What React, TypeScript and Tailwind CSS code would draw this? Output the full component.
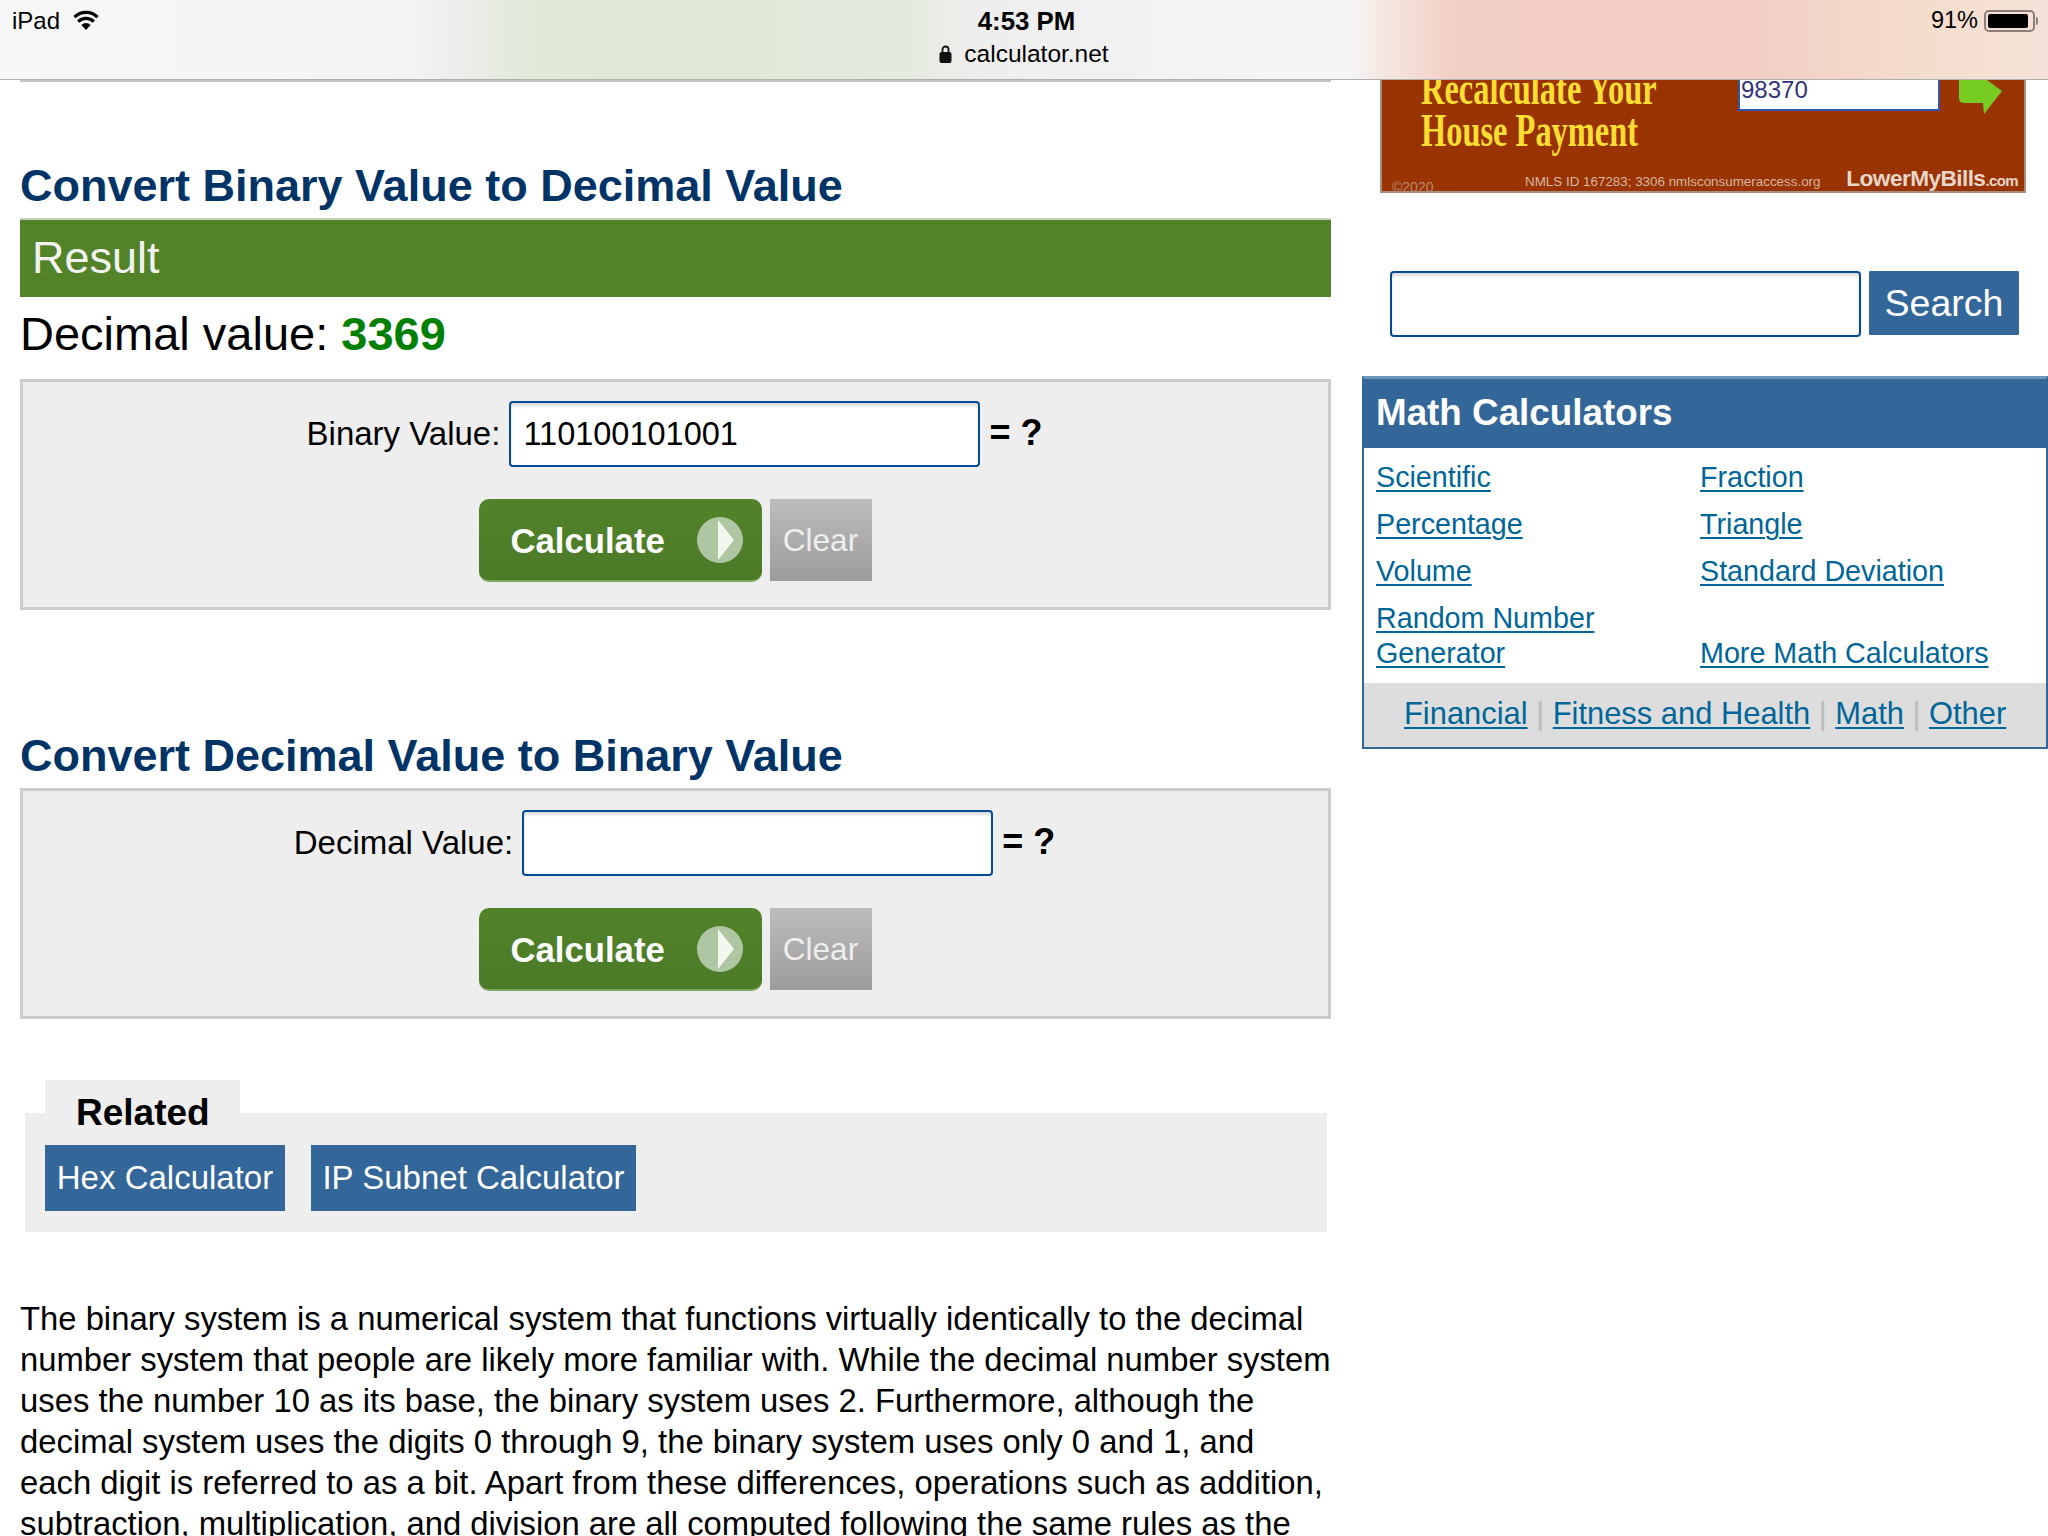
const sans = "font-['Liberation_Sans',Arial,sans-serif]";

function Bar() {
  return (
    <div className="relative z-10 h-[80px] shrink-0 border-b border-[#b0b0b0] bg-[linear-gradient(90deg,#f7f7f7_0%,#f4f4f4_20%,#eeeeee_22%,#e0e9d8_26%,#dfe8d6_36%,#e4eadf_44%,#eeeeee_48%,#f0f0f0_52%,#f5f5f5_62%,#f5f5f5_66%,#f4e4dc_68%,#f2cfc6_71%,#f2cdc5_85%,#f4dccb_93%,#f5e2d8_100%)]">
      <div className="flex items-center justify-between pl-[12px] pr-[10px] h-[42px] text-[24px] text-black">
        <div className="flex items-center gap-[12px] w-[300px]">
          <span>iPad</span>
          <svg width="28" height="21" viewBox="0 0 26 20" className="-mt-[2px]">
            <path d="M13 19 L8.6 14.2 A6.4 6.4 0 0 1 17.4 14.2 Z" fill="#000" />
            <path d="M5.6 11 A10.6 10.6 0 0 1 20.4 11" fill="none" stroke="#000" strokeWidth="3" />
            <path d="M2 6.8 A15.6 15.6 0 0 1 24 6.8" fill="none" stroke="#000" strokeWidth="3" />
          </svg>
        </div>
        <span className="font-bold text-[25.8px] ml-[3px]">4:53 PM</span>
        <div className="flex items-center justify-end gap-[6px] w-[300px]">
          <span className="text-[23.5px]">91%</span>
          <div className="flex items-center gap-[1px]">
            <div className="w-[51px] h-[22px] rounded-[5px] border-2 border-[#8a7f7a] p-[2px]">
              <div className="w-[92%] h-full rounded-[2px] bg-black" />
            </div>
            <div className="w-[2px] h-[8px] rounded-r bg-[#8a7f7a]" />
          </div>
        </div>
      </div>
      <div className="flex items-center justify-center gap-[12px] h-[28px] -mt-[2px] text-[24.5px] text-black">
        <svg width="13" height="18" viewBox="0 0 12 18">
          <rect x="0" y="7" width="12" height="11" rx="2" fill="#111" />
          <path d="M3 8 V4.5 A3 3 0 0 1 9 4.5 V8" fill="none" stroke="#111" strokeWidth="1.8" />
        </svg>
        <span>calculator.net</span>
      </div>
    </div>
  );
}

function Form({ label, value }: { label: string; value: string }) {
  return (
    <div className="h-[231px] border-[3px] border-[#cccccc] bg-[#eeeeee] flex flex-col items-center pt-[19px]">
      <div className="flex items-center text-[33px] text-black -ml-[2px]">
        <span>{label}:</span>
        <div className="ml-[9px] w-[471px] h-[66px] rounded-[4px] border-2 border-[#044b94] bg-white flex items-center px-[12px] text-[32.5px] shadow-[inset_0_3px_3px_#dddddd]">
          {value}
        </div>
        <span className="ml-[9px] font-bold text-[36px] -mt-[3px]">= ?</span>
      </div>
      <div className="flex gap-[8px] mt-[32px] mr-[1px]">
        <div className="w-[283px] h-[83px] rounded-[10px] bg-[linear-gradient(180deg,#528329,#4b7a28)] border-b-2 border-[#7fa85f] flex items-center pl-[32px] pt-[3px] text-white font-bold text-[34.7px]">
          <span>Calculate</span>
          <svg width="46" height="46" viewBox="0 0 46 46" className="ml-[32px] -mt-[3px]">
            <circle cx="23" cy="23" r="23" fill="#aec6a2" />
            <path d="M21 3 L37 23 L21 43 Z" fill="#f3f7f0" />
          </svg>
        </div>
        <div className="w-[102px] h-[82px] pt-[1px] bg-[linear-gradient(180deg,#bcbcbc,#9c9c9c)] flex items-center justify-center text-[31.5px] text-[#eeeeee]">
          Clear
        </div>
      </div>
    </div>
  );
}

function Side() {
  const link = "text-[#006699] underline underline-offset-[3px] decoration-[2px]";
  const sep = "mx-[8.5px] text-[#bbbbbb] font-light";
  return (
    <div className="w-[686px] shrink-0">
      <div className="ml-[18px] w-[646px] h-[113px] border-x-2 border-b-2 border-[#a98d7f] bg-[#993300] overflow-hidden relative">
        <div className="absolute left-[39px] -top-[13px] text-[#ffdd33] font-['Liberation_Serif',serif] font-bold text-[47px] leading-[42px] origin-left scale-x-[0.69] whitespace-nowrap">
          <div>Recalculate Your</div>
          <div>House Payment</div>
        </div>
        <div className="absolute left-[356px] top-0 w-[202px] h-[31px] bg-white border-2 border-t-0 border-[#3355aa] text-[#33337a] text-[24px] leading-[20px] pl-[1px] font-['Liberation_Sans',sans-serif]">98370</div>
        <svg width="46" height="35" viewBox="0 0 46 35" className="absolute left-[575px] top-0">
          <path d="M2 0 H30 L45 11 L27 34 L26 23 H7 Q2 23 2 18 Z" fill="#77cc22" />
        </svg>
        <div className="absolute left-[10px] -bottom-[7px] text-[14px] text-[#b98b73]">©2020</div>
        <div className="absolute left-[143px] -bottom-[1px] text-[13.4px] text-[#d6b6a6] whitespace-nowrap">NMLS ID 167283; 3306 nmlsconsumeraccess.org</div>
        <div className="absolute right-[6px] -bottom-[4px] text-[#e8d6cc] font-bold text-[22.7px] tracking-[-0.6px] whitespace-nowrap">LowerMyBills<span className="text-[15px]">.com</span></div>
      </div>
      <div className="flex gap-[8px] mt-[78px] ml-[28px]">
        <div className="w-[471px] h-[66px] rounded-[4px] border-2 border-[#044b94] bg-white shadow-[inset_0_3px_3px_#dddddd]" />
        <div className="w-[150px] h-[64px] pt-[1px] rounded-[1px] bg-[#336699] text-white text-[37.5px] flex items-center justify-center">Search</div>
      </div>
      <div className="mt-[39px] border-2 border-[#336699] border-t-[3px] border-t-[#6d94bb] h-[373px] flex flex-col">
        <div className="h-[69px] pb-[1px] bg-[#336699] text-white font-bold text-[36.8px] flex items-center pl-[12px]">Math Calculators</div>
        <div className="flex-1 pl-[12px] pt-[12px] grid grid-cols-[324px_1fr] grid-rows-[47px_47px_47px_auto] content-start text-[28.7px] leading-[35px]">
          <div><span className={link}>Scientific</span></div>
          <div><span className={link}>Fraction</span></div>
          <div><span className={link}>Percentage</span></div>
          <div><span className={link}>Triangle</span></div>
          <div><span className={link}>Volume</span></div>
          <div><span className={link}>Standard Deviation</span></div>
          <div><span className={link}>Random Number Generator</span></div>
          <div className="self-end"><span className={link}>More Math Calculators</span></div>
        </div>
        <div className="h-[64px] pb-[1px] bg-[#dddddd] flex items-center pl-[40px] text-[30.9px]">
          <span className={link}>Financial</span>
          <span className={sep}>|</span>
          <span className={link}>Fitness and Health</span>
          <span className={sep}>|</span>
          <span className={link}>Math</span>
          <span className={sep}>|</span>
          <span className={link}>Other</span>
        </div>
      </div>
    </div>
  );
}

export default function App() {
  return (
    <div className={`w-[2048px] h-[1536px] overflow-hidden bg-white flex flex-col ${sans}`}>
      <Bar />
      <div className="flex">
        <div className="w-[1362px] pl-[20px] pr-[31px] shrink-0">
          <div className="h-[2px] bg-[#c4c4c4]" />
          <div className="h-[77px]" />
          <h2 className="h-[59px] leading-[54px] text-[45px] font-bold text-[#003366]">Convert Binary Value to Decimal Value</h2>
          <div className="h-[79px] bg-[#528329] border-t-2 border-[#c5cfbc] flex items-center pl-[12px] pb-[1px] text-[45px] text-[#f2f2f2]">Result</div>
          <div className="h-[82px] flex items-center pb-[7px] text-[47px] text-black">
            <span>Decimal value:&nbsp;</span>
            <span className="font-bold text-[#008000]">3369</span>
          </div>
          <Form label="Binary Value" value="110100101001" />
          <h2 className="mt-[113px] h-[50px] leading-[66px] text-[45px] font-bold text-[#003366]">Convert Decimal Value to Binary Value</h2>
          <div className="h-[15px]" />
          <Form label="Decimal Value" value="" />
          <div className="mt-[61px] ml-[5px] w-[1302px]">
            <div className="ml-[20px] w-[195px] h-[33px] bg-[#eeeeee]" />
            <div className="h-[119px] bg-[#eeeeee] px-[20px] flex flex-col">
              <div className="h-[44px] -mt-[22px] pl-[31px] text-[37px] font-bold text-black leading-[44px]">Related</div>
              <div className="flex gap-[26px] mt-[10px]">
                <div className="h-[66px] w-[240px] bg-[#336699] text-white text-[33px] flex items-center justify-center">Hex Calculator</div>
                <div className="h-[66px] w-[325px] bg-[#336699] text-white text-[33px] flex items-center justify-center">IP Subnet Calculator</div>
              </div>
            </div>
          </div>
          <p className="mt-[66px] w-[1312px] text-[32.8px] leading-[41px] text-black">
            The binary system is a numerical system that functions virtually identically to the decimal number system that people are likely more familiar with. While the decimal number system uses the number 10 as its base, the binary system uses 2. Furthermore, although the decimal system uses the digits 0 through 9, the binary system uses only 0 and 1, and each digit is referred to as a bit. Apart from these differences, operations such as addition, subtraction, multiplication, and division are all computed following the same rules as the
          </p>
        </div>
        <Side />
      </div>
    </div>
  );
}
